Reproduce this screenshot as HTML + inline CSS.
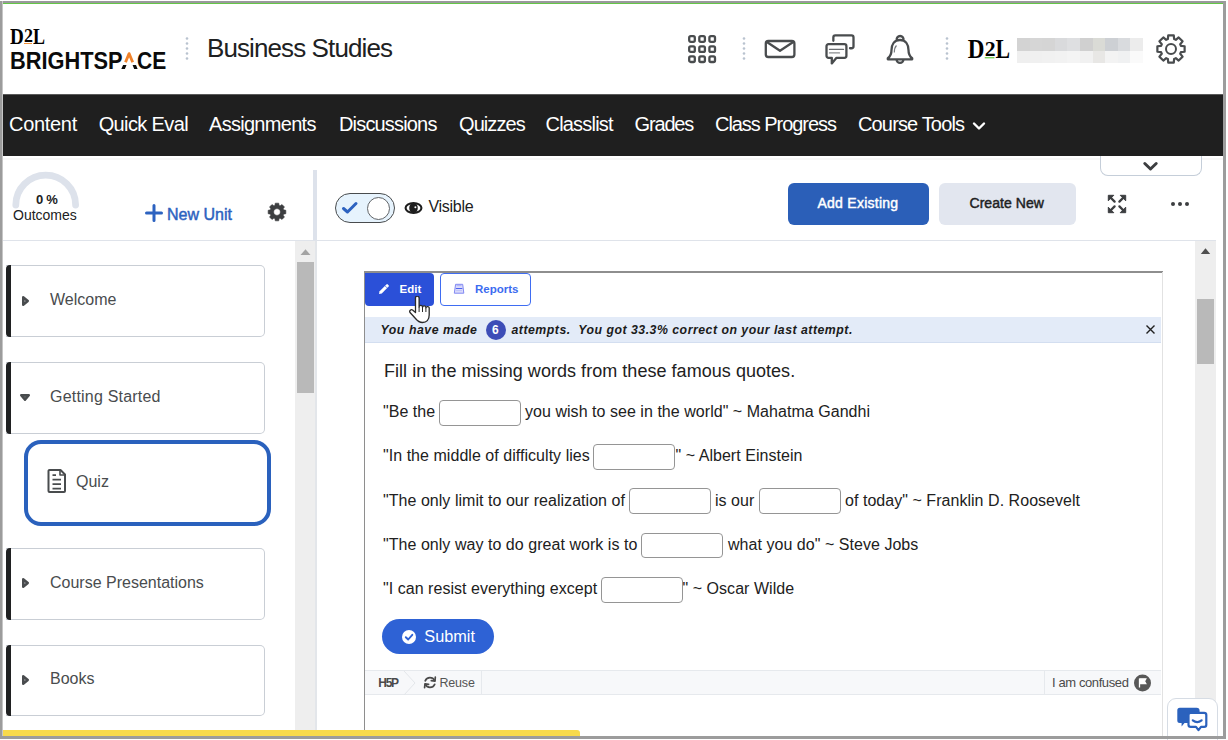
<!DOCTYPE html>
<html><head><meta charset="utf-8">
<style>
html,body{margin:0;padding:0;width:1228px;height:740px;overflow:hidden;background:#fff;}
body{position:relative;font-family:"Liberation Sans",sans-serif;}
.a{position:absolute;}
.t{position:absolute;white-space:nowrap;}
.nav{color:#fff;font-size:20px;line-height:20px;top:114px;}
.dots{position:absolute;width:3px;height:24px;background-image:radial-gradient(circle at 1.5px 1.5px,#b6c0cd 1.2px,transparent 1.5px);background-size:3px 5px;}
.card{position:absolute;left:6px;width:258px;border:1px solid #c9ced5;border-left:none;border-radius:0 5px 5px 0;background:#fff;}
.card::before{content:"";position:absolute;left:0;top:-1px;bottom:-1px;width:5px;background:#202122;border-radius:4px 0 0 4px;}
.ctext{position:absolute;left:44px;font-size:16px;line-height:16px;color:#494c4e;white-space:nowrap;}
.qt{position:absolute;font-size:16px;line-height:16px;color:#212121;white-space:nowrap;letter-spacing:0.04px;margin-top:1px;}
.box{position:absolute;width:80px;height:23.6px;border:1.2px solid #959595;border-radius:4px;background:#fff;}
</style></head><body>

<!-- HEADER -->
<div class="a" id="logo1" style="left:0;top:0;width:60px;height:50px">
 <div class="t" style="left:10.1px;top:26px;font-family:'Liberation Serif',serif;font-weight:bold;font-size:22.5px;line-height:22.5px;color:#000;transform:scaleX(0.85);transform-origin:0 0">D</div>
 <div class="t" style="left:24.1px;top:26.9px;font-family:'Liberation Serif',serif;font-weight:bold;font-size:18px;line-height:18px;color:#000">2</div>
 <div class="t" style="left:33.4px;top:26px;font-family:'Liberation Serif',serif;font-weight:bold;font-size:22.5px;line-height:22.5px;color:#000;transform:scaleX(0.8);transform-origin:0 0">L</div>
 <div class="a" style="left:23.9px;top:42.6px;width:8px;height:1.6px;background:#f0913a"></div>
</div>
<div class="t" id="t-bright" style="left:9.6px;top:48px;font-weight:bold;font-size:24.7px;line-height:25px;color:#0b0b0b;transform:scaleX(0.883);transform-origin:0 0">BRIGHTSP</div>
<div class="t" id="t-bright2" style="left:137px;top:48px;font-weight:bold;font-size:24.7px;line-height:25px;color:#0b0b0b;transform:scaleX(0.853);transform-origin:0 0">CE</div>
<svg class="a" style="left:120px;top:50px" width="18" height="20" viewBox="120 50 18 20"><path d="M125.5 62.3 L129.1 53.6 L132.7 62.3" fill="none" stroke="#f0822a" stroke-width="2.8" stroke-linejoin="round"/><path d="M121.3 69 L123.1 65 L126.5 65 L124.9 69 Z M132.6 65 L136 65 L137.6 69 L134.2 69 Z" fill="#0b0b0b"/></svg>
<svg class="a" style="left:185.2px;top:36px" width="4" height="26" viewBox="0 0 4 26" fill="#b9c3cf"><circle cx="2" cy="2.5" r="1.3"/><circle cx="2" cy="7.5" r="1.3"/><circle cx="2" cy="12.5" r="1.3"/><circle cx="2" cy="17.5" r="1.3"/><circle cx="2" cy="22.5" r="1.3"/></svg>
<div class="t" id="t-bs" style="left:207px;top:35px;font-size:26px;line-height:26px;color:#202122;letter-spacing:-0.9px">Business Studies</div>

<!-- header icons -->
<svg class="a" style="left:688px;top:35px" width="29" height="29" viewBox="0 0 29 29" fill="none" stroke="#494c4e" stroke-width="2.3">
 <rect x="1.2" y="1.2" width="5.6" height="5.6" rx="1.5"/><rect x="11.3" y="1.2" width="5.6" height="5.6" rx="1.5"/><rect x="21.4" y="1.2" width="5.6" height="5.6" rx="1.5"/>
 <rect x="1.2" y="11.3" width="5.6" height="5.6" rx="1.5"/><rect x="11.3" y="11.3" width="5.6" height="5.6" rx="1.5"/><rect x="21.4" y="11.3" width="5.6" height="5.6" rx="1.5"/>
 <rect x="1.2" y="21.4" width="5.6" height="5.6" rx="1.5"/><rect x="11.3" y="21.4" width="5.6" height="5.6" rx="1.5"/><rect x="21.4" y="21.4" width="5.6" height="5.6" rx="1.5"/>
</svg>
<svg class="a" style="left:742px;top:36px" width="4" height="26" viewBox="0 0 4 26" fill="#b9c3cf"><circle cx="2" cy="2.5" r="1.3"/><circle cx="2" cy="7.5" r="1.3"/><circle cx="2" cy="12.5" r="1.3"/><circle cx="2" cy="17.5" r="1.3"/><circle cx="2" cy="22.5" r="1.3"/></svg>
<svg class="a" style="left:764px;top:39px" width="32" height="21" viewBox="0 0 32 21" fill="none" stroke="#494c4e" stroke-width="2.3" stroke-linejoin="round">
 <rect x="1.8" y="2" width="28.6" height="16" rx="2.5"/><path d="M2.5 2.8 L16 11.8 L29.6 2.8"/>
</svg>
<svg class="a" style="left:824px;top:33px" width="32" height="33" viewBox="0 0 32 33" fill="none" stroke="#494c4e" stroke-width="2.3" stroke-linecap="round" stroke-linejoin="round">
 <path d="M9.35 7.8 V4.45 a2 2 0 0 1 2-2 H27.5 a2 2 0 0 1 2 2 V13.25 a2 2 0 0 1 -2 2 H26"/>
 <path d="M4.5 11.2 H20.4 a2 2 0 0 1 2 2 V22.85 a2 2 0 0 1 -2 2 H12.5 L7.8 30.4 V24.85 H4.5 a2 2 0 0 1 -2 -2 V13.2 a2 2 0 0 1 2 -2 Z"/>
 <path d="M5.5 16.4 H19.5" stroke-width="1.4" stroke="#6a6d70"/><path d="M5.5 19.9 H15.5" stroke-width="1.4" stroke="#8a8d90"/>
</svg>
<svg class="a" style="left:886px;top:33px" width="29" height="33" viewBox="0 0 29 33" fill="none" stroke="#494c4e" stroke-width="2.3" stroke-linejoin="round">
 <path d="M10.8 7.2 a3.4 3.4 0 1 1 6.6 0"/>
 <path d="M14 7 C8 7 5.5 12 5.5 17 C5.5 20.5 5 23 1.8 25.3 V26.3 H26.2 V25.3 C23 23 22.5 20.5 22.5 17 C22.5 12 20 7 14 7 Z"/>
 <path d="M10.6 26.5 a3.4 3.4 0 0 0 6.8 0"/>
 <path d="M10.5 12.5 C9 14 8.3 16 8.3 19.5" stroke-width="1.2" stroke="#7a7d80"/>
</svg>
<svg class="a" style="left:944.5px;top:36px" width="4" height="26" viewBox="0 0 4 26" fill="#b9c3cf"><circle cx="2" cy="2.5" r="1.3"/><circle cx="2" cy="7.5" r="1.3"/><circle cx="2" cy="12.5" r="1.3"/><circle cx="2" cy="17.5" r="1.3"/><circle cx="2" cy="22.5" r="1.3"/></svg>
<div class="a" style="left:0;top:0;width:60px;height:50px;transform-origin:10.1px 29.1px;transform:translate(957.8px,11.8px) scale(1.21,1.17)">
 <div class="t" style="left:10.1px;top:26px;font-family:'Liberation Serif',serif;font-weight:bold;font-size:22.5px;line-height:22.5px;color:#000;transform:scaleX(0.85);transform-origin:0 0">D</div>
 <div class="t" style="left:24.1px;top:26.9px;font-family:'Liberation Serif',serif;font-weight:bold;font-size:18px;line-height:18px;color:#000">2</div>
 <div class="t" style="left:33.4px;top:26px;font-family:'Liberation Serif',serif;font-weight:bold;font-size:22.5px;line-height:22.5px;color:#000;transform:scaleX(0.8);transform-origin:0 0">L</div>
 <div class="a" style="left:23.9px;top:42.6px;width:8px;height:1.6px;background:#5fca3f"></div>
</div>
<!-- pixelated name -->
<div class="a" style="left:1017px;top:38px;width:126px;height:25px;display:grid;grid-template-columns:repeat(10,1fr);grid-template-rows:1fr 1fr">
 <div style="background:#d3d3d3"></div><div style="background:#d6d6d6"></div><div style="background:#d5d5d5"></div><div style="background:#d9dadc"></div><div style="background:#dedfe1"></div><div style="background:#d0d0d0"></div><div style="background:#dadbd6"></div><div style="background:#cdd0d4"></div><div style="background:#d9dbde"></div><div style="background:#ececec"></div>
 <div style="background:#efefef"></div><div style="background:#f0f0f0"></div><div style="background:#f1f1f1"></div><div style="background:#f2f2f2"></div><div style="background:#f4f4f4"></div><div style="background:#f1f1f1"></div><div style="background:#e8e7e5"></div><div style="background:#f3f3f3"></div><div style="background:#f0f1f2"></div><div style="background:#fafafa"></div>
</div>
<svg class="a" style="left:1154.5px;top:33.2px" width="32" height="32" viewBox="0 0 32 32" fill="none" stroke="#494c4e" stroke-width="2.2" stroke-linejoin="round"><path d="M12.87 6.08 L13.23 2.38 L18.77 2.38 L19.13 6.08 L20.80 6.78 L23.67 4.41 L27.59 8.33 L25.22 11.20 L25.92 12.87 L29.62 13.23 L29.62 18.77 L25.92 19.13 L25.22 20.80 L27.59 23.67 L23.67 27.59 L20.80 25.22 L19.13 25.92 L18.77 29.62 L13.23 29.62 L12.87 25.92 L11.20 25.22 L8.33 27.59 L4.41 23.67 L6.78 20.80 L6.08 19.13 L2.38 18.77 L2.38 13.23 L6.08 12.87 L6.78 11.20 L4.41 8.33 L8.33 4.41 L11.20 6.78 Z"/><circle cx="16" cy="16" r="5" stroke-width="2"/></svg>

<!-- NAV -->
<div class="a" style="left:2px;top:94px;width:1221px;height:62px;background:#1f1f1f"></div>
<div class="a" style="left:2px;top:94px;width:1221px;height:1px;background:#5a5a5a"></div>
<div class="t nav" id="n1" style="left:9.0px;letter-spacing:-0.30px">Content</div>
<div class="t nav" id="n2" style="left:98.7px;letter-spacing:-0.63px">Quick Eval</div>
<div class="t nav" id="n3" style="left:209.0px;letter-spacing:-0.71px">Assignments</div>
<div class="t nav" id="n4" style="left:339.0px;letter-spacing:-0.83px">Discussions</div>
<div class="t nav" id="n5" style="left:459.0px;letter-spacing:-0.93px">Quizzes</div>
<div class="t nav" id="n6" style="left:545.5px;letter-spacing:-0.80px">Classlist</div>
<div class="t nav" id="n7" style="left:634.6px;letter-spacing:-1.18px">Grades</div>
<div class="t nav" id="n8" style="left:715.0px;letter-spacing:-1.05px">Class Progress</div>
<div class="t nav" id="n9" style="left:858.0px;letter-spacing:-0.85px">Course Tools</div>
<svg class="a" style="left:972px;top:121px" width="14" height="10" viewBox="0 0 14 10" fill="none" stroke="#fff" stroke-width="2.4" stroke-linecap="round" stroke-linejoin="round"><path d="M2 2.5 L7 7.5 L12 2.5"/></svg>

<!-- below nav -->
<div class="a" style="left:2px;top:158px;width:1221px;height:2px;background:#f7f7f7"></div>


<!-- TOOLBAR / SIDEBAR HEADER -->
<svg class="a" style="left:8px;top:167px" width="76" height="46" viewBox="0 0 76 46" fill="none"><path d="M7.8 38 A29.9 29.9 0 0 1 67.6 38" stroke="#dde2eb" stroke-width="6.8" stroke-linecap="round"/></svg>
<div class="t" id="t-pct" style="left:36px;top:193px;font-size:13px;line-height:13px;font-weight:bold;color:#202122;letter-spacing:-0.3px">0 %</div>
<div class="t" id="t-outc" style="left:13px;top:207.7px;font-size:14px;line-height:14px;color:#202122">Outcomes</div>
<svg class="a" style="left:145px;top:204px" width="18" height="18" viewBox="0 0 18 18" stroke="#2c62c0" stroke-width="3" stroke-linecap="round"><path d="M9 1.5 V16.5 M1.5 9 H16.5"/></svg>
<div class="t" id="t-nu" style="left:167px;top:206.8px;font-size:16px;line-height:16px;color:#2c62c0;-webkit-text-stroke:0.45px #2c62c0;letter-spacing:0px">New Unit</div>
<svg class="a" style="left:267px;top:202.3px" width="20" height="20" viewBox="0 0 20 20"><path fill="#3c3e40" fill-rule="evenodd" stroke="#3c3e40" stroke-width="0.6" stroke-linejoin="round" d="M7.87 3.44 L8.28 1.17 L11.72 1.17 L12.13 3.44 L13.13 3.85 L15.03 2.54 L17.46 4.97 L16.15 6.87 L16.56 7.87 L18.83 8.28 L18.83 11.72 L16.56 12.13 L16.15 13.13 L17.46 15.03 L15.03 17.46 L13.13 16.15 L12.13 16.56 L11.72 18.83 L8.28 18.83 L7.87 16.56 L6.87 16.15 L4.97 17.46 L2.54 15.03 L3.85 13.13 L3.44 12.13 L1.17 11.72 L1.17 8.28 L3.44 7.87 L3.85 6.87 L2.54 4.97 L4.97 2.54 L6.87 3.85 Z M10 6.6 A3.4 3.4 0 1 0 10.01 6.6 Z"/></svg>

<div class="a" style="left:312.5px;top:170px;width:4px;height:70px;background:#dde2eb"></div>
<div class="a" style="left:2.5px;top:240px;width:1213.5px;height:1px;background:#dfe3ea"></div>

<!-- toggle -->
<div class="a" style="left:335px;top:193px;width:57.5px;height:27.5px;border:1.3px solid #494c4e;border-radius:16px;background:#e6f3fd"></div>
<div class="a" style="left:366.8px;top:196.8px;width:21px;height:21px;border:1.5px solid #606468;border-radius:50%;background:#fff"></div>
<svg class="a" style="left:341px;top:201px" width="18" height="14" viewBox="0 0 18 14" fill="none" stroke="#2c62c0" stroke-width="3" stroke-linecap="round" stroke-linejoin="round"><path d="M2.5 7.5 L6.5 11 L15 2.5"/></svg>
<svg class="a" style="left:404px;top:201px" width="19" height="14" viewBox="0 0 19 14"><ellipse cx="9.5" cy="7" rx="9" ry="6.1" fill="#1e1e1e"/><ellipse cx="9.5" cy="7" rx="6.9" ry="3.9" fill="#fff"/><ellipse cx="9.5" cy="7" rx="4.3" ry="5.2" fill="#1e1e1e"/><circle cx="11.4" cy="6.3" r="1" fill="#fff"/></svg>
<div class="t" id="t-vis" style="left:428.5px;top:199px;font-size:16px;line-height:16px;color:#202122;letter-spacing:-0.3px">Visible</div>

<div class="a" style="left:788px;top:183px;width:141px;height:42px;border-radius:6px;background:#2b5fb8"></div>
<div class="t" id="t-ae" style="left:817.5px;top:196px;font-size:14px;line-height:14px;color:#fff;-webkit-text-stroke:0.45px #fff;letter-spacing:0.25px">Add Existing</div>
<div class="a" style="left:939px;top:183px;width:137px;height:42px;border-radius:6px;background:#e2e6ef"></div>
<div class="t" id="t-cn" style="left:969.5px;top:196px;font-size:14px;line-height:14px;color:#202122;-webkit-text-stroke:0.45px #202122;letter-spacing:0.05px">Create New</div>
<svg class="a" style="left:1107px;top:194px" width="20" height="20" viewBox="0 0 20 20" fill="#3c3e40" stroke="#3c3e40" stroke-width="2.3" stroke-linecap="butt">
 <path d="M3.5 3.5 L7.6 7.6 M16.5 3.5 L12.4 7.6 M3.5 16.5 L7.6 12.4 M16.5 16.5 L12.4 12.4" fill="none" stroke-linecap="round"/>
 <path d="M1.3 1.3 H6.8 L1.3 6.8 Z M18.7 1.3 H13.2 L18.7 6.8 Z M1.3 18.7 H6.8 L1.3 13.2 Z M18.7 18.7 H13.2 L18.7 13.2 Z" stroke-width="1" stroke-linejoin="round"/>
</svg>
<div class="a" style="left:1170.5px;top:201.8px;width:4.6px;height:4.6px;border-radius:50%;background:#3c3e40"></div>
<div class="a" style="left:1177.5px;top:201.8px;width:4.6px;height:4.6px;border-radius:50%;background:#3c3e40"></div>
<div class="a" style="left:1184.5px;top:201.8px;width:4.6px;height:4.6px;border-radius:50%;background:#3c3e40"></div>
<!-- chevron tab -->
<div class="a" style="left:1100px;top:156px;width:99.5px;height:18.5px;border:1px solid #c5ced9;border-top:none;border-radius:0 0 8px 8px;background:#fff"></div>
<svg class="a" style="left:1142px;top:160px" width="17" height="13" viewBox="0 0 17 13" fill="none" stroke="#3c3e40" stroke-width="3" stroke-linecap="round" stroke-linejoin="round"><path d="M2.8 3.5 L8.5 9 L14.2 3.5"/></svg>

<!-- SIDEBAR -->
<div class="card" style="top:264.5px;height:70px"><div class="ctext" id="c1" style="top:26.3px">Welcome</div></div>
<svg class="a" style="left:21px;top:294.5px" width="9" height="12" viewBox="0 0 9 12"><path d="M2.2 2.2 L6.8 6 L2.2 9.8 Z" fill="#a0a3a6" stroke="#494c4e" stroke-width="2.4" stroke-linejoin="round"/></svg>
<div class="card" style="top:362px;height:69.5px"><div class="ctext" id="c2" style="top:25.5px;letter-spacing:0.2px">Getting Started</div></div>
<svg class="a" style="left:19px;top:392.5px" width="12" height="9" viewBox="0 0 12 9"><path d="M2.2 2.2 L9.8 2.2 L6 6.8 Z" fill="#6a6d70" stroke="#494c4e" stroke-width="2.4" stroke-linejoin="round"/></svg>
<div class="a" style="left:23.8px;top:440px;width:239.6px;height:78.2px;border:4px solid #2a61bd;border-radius:17px;background:#fff"></div>
<svg class="a" style="left:47px;top:468px" width="20" height="26" viewBox="0 0 20 26" fill="none" stroke="#494c4e" stroke-width="2" stroke-linejoin="round"><path d="M2.5 2 H13.5 L18 6.5 V23 a1 1 0 0 1 -1 1 H2.5 a1 1 0 0 1 -1 -1 V3 a1 1 0 0 1 1 -1 Z"/><path d="M13 2.2 V7 H17.8" stroke-width="1.6"/><path d="M5.5 7.2 H9 M5.5 11.7 H14 M5.5 16.2 H14 M5.5 20.7 H14" stroke-width="1.8"/></svg>
<div class="t" id="c3" style="left:76px;top:474px;font-size:16px;line-height:16px;color:#494c4e">Quiz</div>
<div class="card" style="top:548px;height:69.5px"><div class="ctext" id="c4" style="top:25.5px">Course Presentations</div></div>
<svg class="a" style="left:21px;top:577px" width="9" height="12" viewBox="0 0 9 12"><path d="M2.2 2.2 L6.8 6 L2.2 9.8 Z" fill="#a0a3a6" stroke="#494c4e" stroke-width="2.4" stroke-linejoin="round"/></svg>
<div class="card" style="top:644.5px;height:69.5px"><div class="ctext" id="c5" style="top:25.5px">Books</div></div>
<svg class="a" style="left:21px;top:674px" width="9" height="12" viewBox="0 0 9 12"><path d="M2.2 2.2 L6.8 6 L2.2 9.8 Z" fill="#a0a3a6" stroke="#494c4e" stroke-width="2.4" stroke-linejoin="round"/></svg>

<!-- sidebar scrollbar -->
<div class="a" style="left:295px;top:241px;width:20px;height:495px;background:#eeeeee"></div>
<div class="a" style="left:315px;top:241px;width:2px;height:495px;background:#e3e6ea"></div>
<svg class="a" style="left:299px;top:248px" width="13" height="8" viewBox="0 0 13 8"><path d="M1.5 7 L6.5 1.2 L11.5 7 Z" fill="#a3a3a3"/></svg>
<div class="a" style="left:296.5px;top:262px;width:17.5px;height:131px;background:#b9b9b9"></div>

<!-- main scrollbar -->
<div class="a" style="left:1195px;top:241px;width:21px;height:495px;background:#eeeeee"></div>
<svg class="a" style="left:1200px;top:247px" width="11" height="8" viewBox="0 0 11 8"><path d="M0.8 7 L5.5 1.3 L10.2 7 Z" fill="#4f4f4f"/></svg>
<div class="a" style="left:1197px;top:299px;width:17px;height:64.5px;background:#b9b9b9"></div>

<!-- IFRAME -->
<div class="a" style="left:363.5px;top:271px;width:1.6px;height:459px;background:#8e8e8e"></div>
<div class="a" style="left:363.5px;top:271px;width:799px;height:1.8px;background:#8e8e8e"></div>
<div class="a" style="left:1161.5px;top:272px;width:1px;height:465px;background:#e2e2e2"></div>
<div class="a" style="left:365px;top:273px;width:69px;height:32.7px;border-radius:0 4px 4px 4px;background:#2b50d8"></div>
<svg class="a" style="left:378px;top:283px" width="12" height="12" viewBox="0 0 12 12"><path d="M1 11 L1.6 8.2 L8.4 1.4 a1 1 0 0 1 1.4 0 L10.6 2.2 a1 1 0 0 1 0 1.4 L3.8 10.4 Z" fill="#fff"/><path d="M7.1 2.9 L9.1 4.9" stroke="#2b50d8" stroke-width="0.7"/></svg>
<div class="t" id="t-edit" style="left:399.5px;top:283px;font-size:11.5px;line-height:12px;font-weight:bold;color:#fff">Edit</div>
<div class="a" style="left:440px;top:273px;width:88.8px;height:30.5px;border:1px solid #3f6df2;border-radius:4px;background:#fff"></div>
<svg class="a" style="left:453px;top:283px" width="12" height="11" viewBox="0 0 12 11"><path d="M2.6 1.3 H9.7 L10.8 10.2 H1.3 Z" fill="#dcdcfb" stroke="#8088f2" stroke-width="1" stroke-linejoin="round"/><path d="M3.3 5.5 H8.9" stroke="#4d62ef" stroke-width="1.1" stroke-linecap="round"/><path d="M3 7.6 H9" stroke="#b9bff7" stroke-width="0.9"/><path d="M3.5 2.6 H8.5" stroke="#b3b8f6" stroke-width="1.2"/></svg>
<div class="t" id="t-rep" style="left:475px;top:283px;font-size:11.5px;line-height:12px;font-weight:bold;color:#3c6cf0">Reports</div>
<!-- banner -->
<div class="a" style="left:365px;top:317px;width:796px;height:25px;background:#e3ebf8;border-bottom:1px solid #d3def0"></div>
<div class="t" id="t-b1" style="left:380.5px;top:323.6px;font-size:12.3px;line-height:12px;font-weight:bold;font-style:italic;color:#1b1b1b;letter-spacing:0.55px">You have made</div>
<div class="a" style="left:486px;top:320px;width:20px;height:20px;border-radius:50%;background:#3d4db7"></div>
<div class="t" id="t-6" style="left:492px;top:324px;font-size:12px;line-height:12px;font-weight:bold;color:#fff">6</div>
<div class="t" id="t-b2" style="left:511.5px;top:323.6px;font-size:12.3px;line-height:12px;font-weight:bold;font-style:italic;color:#1b1b1b;letter-spacing:0.5px">attempts.&nbsp; You got 33.3% correct on your last attempt.</div>
<svg class="a" style="left:1146px;top:325px" width="9" height="9" viewBox="0 0 9 9" stroke="#202020" stroke-width="1.4"><path d="M0.5 0.5 L8.5 8.5 M8.5 0.5 L0.5 8.5"/></svg>

<!-- question -->
<div class="t" id="q0" style="left:384px;top:362px;font-size:18px;line-height:18px;color:#212121;letter-spacing:0.04px">Fill in the missing words from these famous quotes.</div>
<div class="qt" id="q1" style="left:383px;top:403px">"Be the</div>
<div class="box" style="left:439px;top:400px"></div>
<div class="qt" id="q1b" style="left:525px;top:403px">you wish to see in the world" ~ Mahatma Gandhi</div>
<div class="qt" id="q2" style="left:383px;top:447px">"In the middle of difficulty lies</div>
<div class="box" style="left:593px;top:444px"></div>
<div class="qt" id="q2b" style="left:675.5px;top:447px">" ~ Albert Einstein</div>
<div class="qt" id="q3" style="left:383px;top:492px">"The only limit to our realization of</div>
<div class="box" style="left:628.5px;top:488.3px"></div>
<div class="qt" id="q3b" style="left:715px;top:492px">is our</div>
<div class="box" style="left:759px;top:488.3px"></div>
<div class="qt" id="q3c" style="left:845px;top:492px">of today" ~ Franklin D. Roosevelt</div>
<div class="qt" id="q4" style="left:383px;top:536px">"The only way to do great work is to</div>
<div class="box" style="left:641px;top:532.8px"></div>
<div class="qt" id="q4b" style="left:728px;top:536px">what you do" ~ Steve Jobs</div>
<div class="qt" id="q5" style="left:383px;top:580px">"I can resist everything except</div>
<div class="box" style="left:600.5px;top:577.3px"></div>
<div class="qt" id="q5b" style="left:682.5px;top:580px">" ~ Oscar Wilde</div>

<div class="a" style="left:382px;top:619px;width:112px;height:35px;border-radius:18px;background:#2e62d5"></div>
<svg class="a" style="left:402px;top:630px" width="14" height="14" viewBox="0 0 14 14"><circle cx="7" cy="7" r="7" fill="#fff"/><path d="M3.8 7.2 L6.2 9.5 L10.3 4.8" fill="none" stroke="#2e62d5" stroke-width="1.9" stroke-linecap="round" stroke-linejoin="round"/></svg>
<div class="t" id="t-sub" style="left:424.3px;top:628.4px;font-size:16.3px;line-height:16.3px;color:#fff">Submit</div>

<!-- h5p bar -->
<div class="a" style="left:365px;top:669.8px;width:796px;height:23px;background:#f7f8fa;border-top:1px solid #e6e9ed;border-bottom:1px solid #e6e9ed"></div>
<div class="t" id="t-h5p" style="left:378.3px;top:677px;font-size:12px;line-height:12px;font-weight:bold;color:#4a4a4a;letter-spacing:-1.3px">H5P</div>
<svg class="a" style="left:403px;top:671px" width="14" height="24" viewBox="0 0 14 24" fill="none" stroke="#e3e6ea" stroke-width="1"><path d="M1 0 L12 12 L1 24"/></svg>
<svg class="a" style="left:422.5px;top:675.5px" width="14" height="13" viewBox="0 0 14 13" fill="none" stroke="#4a4a4a" stroke-width="1.7" stroke-linecap="round"><path d="M11.6 4.6 A5.2 5.2 0 0 0 2.2 4.8"/><path d="M2.2 8.2 A5.2 5.2 0 0 0 11.7 8.3"/><path d="M12.3 1.2 L12 5.2 L8.3 4.6" stroke-linejoin="round"/><path d="M1.6 11.6 L2 7.8 L5.6 8.3" stroke-linejoin="round"/></svg>
<div class="t" id="t-reuse" style="left:439.5px;top:677.1px;font-size:12.5px;line-height:12.5px;color:#555;letter-spacing:-0.2px">Reuse</div>
<div class="a" style="left:481px;top:671px;width:1px;height:23px;background:#e6e9ed"></div>
<div class="a" style="left:1043.5px;top:671px;width:1px;height:23px;background:#e6e9ed"></div>
<div class="t" id="t-conf" style="left:1052px;top:676px;font-size:13px;line-height:13px;color:#4a4a4a;letter-spacing:-0.4px">I am confused</div>
<svg class="a" style="left:1134px;top:674px" width="17" height="18" viewBox="0 0 17 18"><circle cx="8.5" cy="9" r="8.5" fill="#585858"/><path d="M5.5 4.5 V13.5 M5.5 4.8 H11.8 L10.5 7.2 L11.8 9.6 H5.5" fill="#fff" stroke="#fff" stroke-width="1.3"/></svg>

<!-- chat widget -->
<div class="a" style="left:1166.8px;top:697.8px;width:49.5px;height:50px;border:1px solid #d6dce4;border-radius:9px;background:#fff"></div>
<svg class="a" style="left:1176px;top:706px" width="33" height="27" viewBox="0 0 33 27"><path d="M3.8 1.7 H20.6 a3 3 0 0 1 3 3 V14 a3 3 0 0 1 -3 3 H8.5 L5.6 20.5 V17 H3.8 a2.5 2.5 0 0 1 -2.5 -2.5 V4.2 a2.5 2.5 0 0 1 2.5 -2.5 Z" fill="#2b62bd"/><path d="M14.7 6.9 H28.1 a2.2 2.2 0 0 1 2.2 2.2 V18.7 a2.2 2.2 0 0 1 -2.2 2.2 H25 L22.5 24.2 L20 20.9 H14.7 a2.2 2.2 0 0 1 -2.2 -2.2 V9.1 A2.2 2.2 0 0 1 14.7 6.9 Z" fill="#fff" stroke="#2b62bd" stroke-width="2.2" stroke-linejoin="round"/><path d="M16.8 14.3 Q21.2 17.8 25.6 14.3" fill="none" stroke="#2b62bd" stroke-width="2.2" stroke-linecap="round"/></svg>

<!-- yellow bar -->
<div class="a" style="left:2px;top:730px;width:578px;height:6.2px;border-radius:0 3px 0 0;background:#f8da4c"></div>

<!-- cursor -->
<svg class="a" style="left:408px;top:296px" width="24" height="28" viewBox="0 0 24 28"><path d="M7.5 2 a1.8 1.8 0 0 1 3.6 0 V11 a1.7 1.7 0 0 1 3.4 0.3 a1.7 1.7 0 0 1 3.4 0.5 a1.7 1.7 0 0 1 3.3 0.8 V19 C21.2 24 18.5 26.5 14.5 26.5 C11 26.5 9.5 25 7.5 22.5 L2 16.5 a1.8 1.8 0 0 1 2.6 -2.4 L7.5 16.5 Z" fill="#fff" stroke="#2a2a2a" stroke-width="1.3" stroke-linejoin="round"/><path d="M11.1 11 V16 M14.5 11.3 V16 M17.9 11.8 V16" stroke="#2a2a2a" stroke-width="1"/></svg>

<!-- frame border -->
<div class="a" style="left:0;top:1px;width:1226px;height:2px;background:#9a989c"></div>
<div class="a" style="left:3px;top:3px;width:1220px;height:1px;background:#64c646"></div>
<div class="a" style="left:0;top:1px;width:2px;height:738px;background:#9c9c9c"></div><div class="a" style="left:2px;top:1px;width:1px;height:738px;background:#c6c6c6"></div>
<div class="a" style="left:1223px;top:1px;width:3px;height:738px;background:#9c9c9c"></div>
<div class="a" style="left:0;top:736px;width:1226px;height:3px;background:#9c9c9c"></div>

</body></html>
